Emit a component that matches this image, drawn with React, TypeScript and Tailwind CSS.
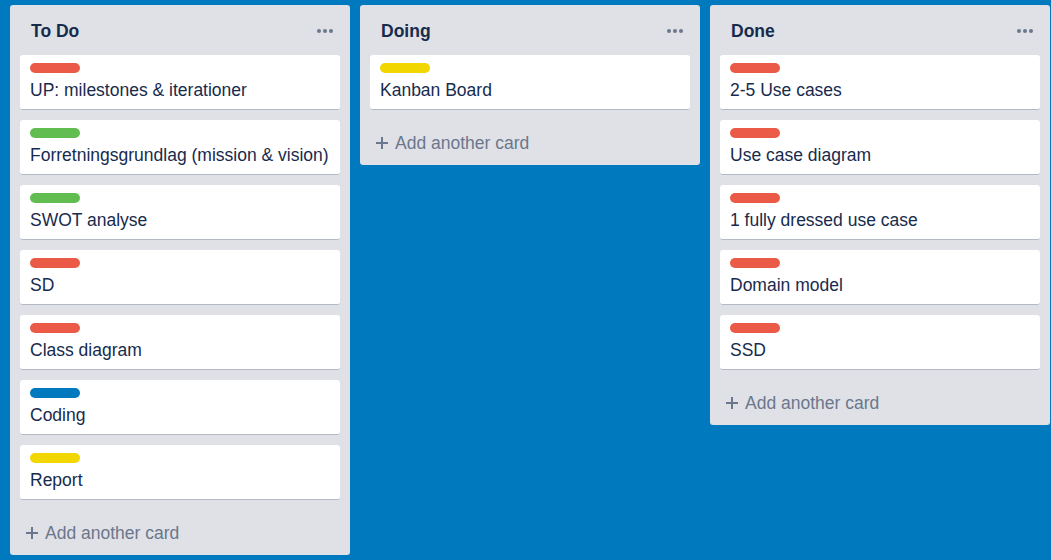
type Card = { title: string; label: string };
type List = { name: string; cards: Card[] };

const red = "bg-[#eb5a46]";
const green = "bg-[#61bd4f]";
const blue = "bg-[#0079bf]";
const yellow = "bg-[#f2d600]";

const lists: List[] = [
  {
    name: "To Do",
    cards: [
      { title: "UP: milestones & iterationer", label: red },
      { title: "Forretningsgrundlag (mission & vision)", label: green },
      { title: "SWOT analyse", label: green },
      { title: "SD", label: red },
      { title: "Class diagram", label: red },
      { title: "Coding", label: blue },
      { title: "Report", label: yellow },
    ],
  },
  {
    name: "Doing",
    cards: [{ title: "Kanban Board", label: yellow }],
  },
  {
    name: "Done",
    cards: [
      { title: "2-5 Use cases", label: red },
      { title: "Use case diagram", label: red },
      { title: "1 fully dressed use case", label: red },
      { title: "Domain model", label: red },
      { title: "SSD", label: red },
    ],
  },
];

const BoardCard = ({ title, label }: Card) => (
  <div className="h-[55px] bg-white rounded-[3px] border-b border-[#b3bac5] px-2.5 pt-2">
    <div className={`h-2.5 w-[50px] rounded-full ${label}`} />
    <div className="mt-[7px] text-[17.5px] leading-5 text-[#172b4d] whitespace-nowrap">{title}</div>
  </div>
);

const BoardList = ({ name, cards }: List) => (
  <div className="w-[340px] shrink-0 bg-[#dfe1e6] rounded-[3px] px-2.5">
    <div className="h-[50px] flex items-center justify-between pl-[11px] pr-[7px] pt-[2px]">
      <h2 className="text-[17.5px] leading-5 font-bold text-[#172b4d]">{name}</h2>
      <div className="flex gap-[2px]">
        <span className="w-1 h-1 rounded-full bg-[#6b778c]" />
        <span className="w-1 h-1 rounded-full bg-[#6b778c]" />
        <span className="w-1 h-1 rounded-full bg-[#6b778c]" />
      </div>
    </div>
    <div className="flex flex-col gap-2.5">
      {cards.map((card, i) => (
        <BoardCard key={i} {...card} />
      ))}
    </div>
    <div className="pt-[23px] pb-[12px] pl-[6px] flex items-center gap-[7px] text-[#6b778c] text-[17.5px] leading-5">
      <svg width="12" height="12" viewBox="0 0 12 12" fill="none" stroke="currentColor" strokeWidth="2">
        <path d="M6 0v12M0 6h12" />
      </svg>
      <span>Add another card</span>
    </div>
  </div>
);

const App = () => {
  return (
    <div
      className="w-[1051px] h-[560px] bg-[#0079bf] flex items-start gap-2.5 pl-2.5 pt-[5px] overflow-hidden"
      style={{ fontFamily: '"Liberation Sans", Arial, sans-serif' }}
    >
      {lists.map((list) => (
        <BoardList key={list.name} {...list} />
      ))}
    </div>
  );
};

export default App;
